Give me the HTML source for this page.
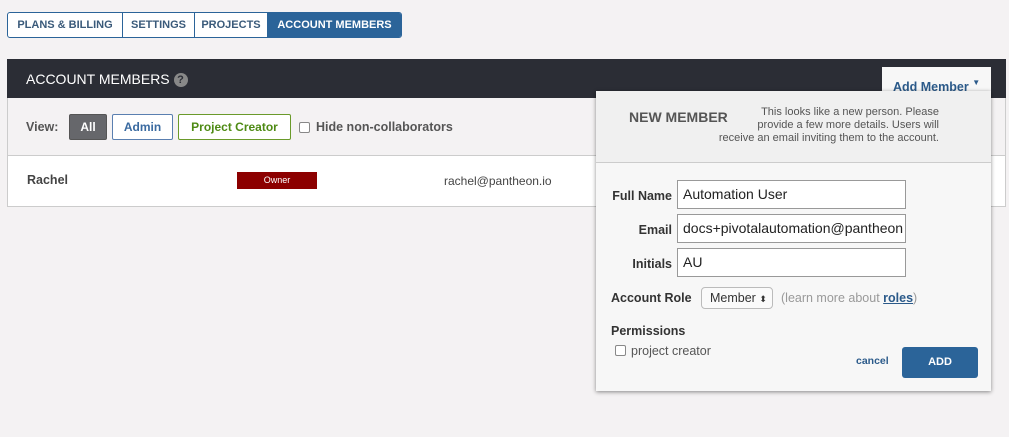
<!DOCTYPE html>
<html><head><style>
*{box-sizing:border-box;margin:0;padding:0}
body{width:1009px;height:437px;background:#f4f2f3;font-family:"Liberation Sans",sans-serif;position:relative;overflow:hidden;color:#333}
.abs{position:absolute}
.tabs{left:7px;top:12px;height:26px;display:flex;border:1px solid #2b6499;border-radius:3px;overflow:hidden;background:#fff}
.tabs div{font-size:11px;font-weight:bold;color:#3a5a7a;line-height:24px;border-right:1px solid #2b6499;text-align:center;white-space:nowrap}
.tabs div.on{background:#2b6499;color:#fff;border:none}
.hdr{left:7px;top:59px;width:999px;height:39px;background:#2b2d35;color:#fff;font-size:14px;padding:12px 19px}
.q{display:inline-block;width:14px;height:14px;border-radius:50%;background:#888;color:#2b2d35;font-size:11px;text-align:center;line-height:14px;font-weight:bold;vertical-align:1px}
.filt{left:7px;top:98px;width:999px;height:58px;border-left:1px solid #ccc;border-right:1px solid #ccc;border-bottom:1px solid #ccc}
.btn{position:absolute;top:16px;height:26px;border-radius:2px;font-size:12px;font-weight:bold;line-height:24px;text-align:center}
.row{left:7px;top:156px;width:999px;height:51px;background:#fff;border:1px solid #ccc;border-top:none}
.pop{left:596px;top:91px;width:395px;height:300px;background:#f7f7f7;box-shadow:0 1px 4px rgba(0,0,0,.45)}
.inp{position:absolute;left:81px;width:229px;height:29px;background:#fff;border:1px solid #999;font-size:14px;padding:5px 5px;color:#222}
.lbl{position:absolute;right:319px;font-size:12.5px;font-weight:bold;color:#333}
</style></head><body>
<div class="abs tabs"><div style="width:115px">PLANS &amp; BILLING</div><div style="width:72px">SETTINGS</div><div style="width:73px">PROJECTS</div><div class="on" style="width:133px">ACCOUNT MEMBERS</div></div>
<div class="abs hdr">ACCOUNT MEMBERS <span class="q">?</span></div>
<div class="abs filt">
<span class="abs" style="left:18px;top:22px;font-size:12.5px;font-weight:bold;color:#555">View:</span>
<div class="btn" style="left:61px;width:38px;background:#66676b;color:#fff;border:1px solid #555">All</div>
<div class="btn" style="left:104px;width:61px;border:1px solid #5a7fb0;color:#3a6aa0;background:#fff">Admin</div>
<div class="btn" style="left:170px;width:113px;border:1px solid #6a9a2a;color:#4e8a14;background:#fff">Project Creator</div>
<span class="abs" style="left:291px;top:24px;width:11px;height:11px;border:1px solid #888;border-radius:2px;background:#fff"></span>
<span class="abs" style="left:308px;top:22px;font-size:12.5px;font-weight:bold;color:#555">Hide non-collaborators</span>
</div>
<div class="abs row">
<span class="abs" style="left:19px;top:17px;font-size:12.5px;font-weight:bold;color:#444">Rachel</span>
<span class="abs" style="left:229px;top:16px;width:80px;height:17px;background:#8c0000;color:#fff;font-size:9px;text-align:center;line-height:17px">Owner</span>
<span class="abs" style="left:436px;top:18px;font-size:12px;color:#444">rachel@pantheon.io</span>
</div>
<div class="abs" style="left:882px;top:67px;width:109px;height:30px;background:#f7f7f7;font-size:12.5px;font-weight:bold;color:#2b5a8a;padding:11px 0 0 11px;white-space:nowrap">Add Member <span style="font-size:8px;vertical-align:6px">▼</span></div>
<div class="abs pop">
<div class="abs" style="left:0;top:0;width:395px;height:72px;background:#f0f0f0;border-bottom:1px solid #ccc"></div>
<span class="abs" style="left:33px;top:18px;font-size:14px;font-weight:bold;color:#555">NEW MEMBER</span>
<div class="abs" style="right:52px;top:15px;width:300px;text-align:right;font-size:11px;line-height:13px;color:#555;white-space:nowrap">This looks like a new person. Please<br>provide a few more details. Users will<br>receive an email inviting them to the account.</div>
<span class="lbl" style="top:98px">Full Name</span><div class="inp" style="top:89px">Automation User</div>
<span class="lbl" style="top:132px">Email</span><div class="inp" style="top:123px;overflow:hidden;white-space:nowrap">docs+pivotalautomation@pantheon</div>
<span class="lbl" style="top:166px">Initials</span><div class="inp" style="top:157px">AU</div>
<span class="abs" style="left:15px;top:200px;font-size:12.5px;font-weight:bold">Account Role</span>
<div class="abs" style="left:105px;top:196px;width:72px;height:22px;border:1px solid #bbb;border-radius:4px;background:#fafafa;font-size:12.5px;padding:3px 8px;white-space:nowrap">Member <span style="font-size:9px">⬍</span></div>
<span class="abs" style="left:185px;top:200px;font-size:12.5px;color:#999">(learn more about <b style="color:#2b5a8a;text-decoration:underline">roles</b>)</span>
<span class="abs" style="left:15px;top:233px;font-size:12.5px;font-weight:bold">Permissions</span>
<span class="abs" style="left:19px;top:254px;width:11px;height:11px;border:1px solid #888;border-radius:2px;background:#fff"></span>
<span class="abs" style="left:35px;top:253px;font-size:12.5px;color:#555">project creator</span>
<span class="abs" style="left:260px;top:264px;font-size:10.5px;font-weight:bold;color:#2b5a8a">cancel</span>
<div class="abs" style="left:306px;top:256px;width:76px;height:31px;background:#2b6499;border-radius:3px;color:#fff;font-size:11px;font-weight:bold;text-align:center;line-height:31px">ADD</div>
</div>
</body></html>
